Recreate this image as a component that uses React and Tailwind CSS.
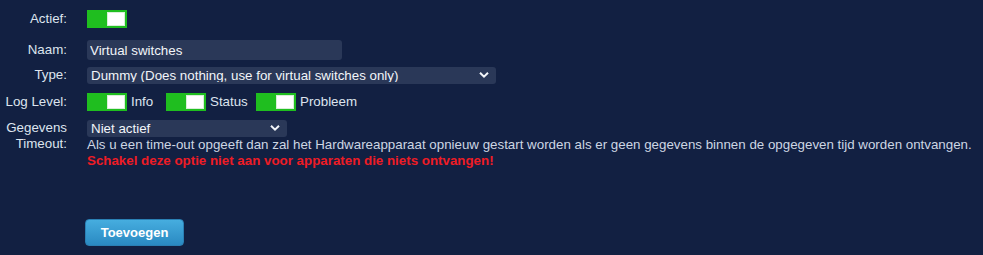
import { useState } from 'react';

const Toggle = ({ on, onClick }) => (
  <button
    type="button"
    onClick={onClick}
    className={`relative h-[18px] w-[40px] shrink-0 ${on ? 'bg-[#1fbe1f]' : 'bg-[#5a6478]'}`}
  >
    <span
      className={`absolute top-[2px] h-[14px] w-[18px] border border-[#d8efd8] bg-white ${on ? 'right-[2px]' : 'left-[2px]'}`}
    />
  </button>
);

const Chevron = () => (
  <svg
    className="pointer-events-none absolute right-[7px] top-1/2 -translate-y-1/2"
    width="10"
    height="7"
    viewBox="0 0 10 7"
    fill="none"
    stroke="#f2f5f9"
    strokeWidth="2"
  >
    <path d="M1 1.2l4 4 4-4" />
  </svg>
);

const Select = ({ value, onChange, options, className }) => (
  <div className={`relative ${className}`}>
    <select
      value={value}
      onChange={(e) => onChange(e.target.value)}
      className="h-full w-full appearance-none rounded-[3px] bg-[#2a3858] pl-[4px] pr-6 text-[13.33px] leading-none text-[#f2f5f9] outline-none"
    >
      {options.map((o) => (
        <option key={o} value={o}>
          {o}
        </option>
      ))}
    </select>
    <Chevron />
  </div>
);

const Label = ({ children, className = '' }) => (
  <div className={`w-[67px] shrink-0 text-right text-[13.33px] leading-[16px] text-[#dde4ee] ${className}`}>
    {children}
  </div>
);

export default function App() {
  const [actief, setActief] = useState(true);
  const [naam, setNaam] = useState('Virtual switches');
  const [type, setType] = useState('Dummy (Does nothing, use for virtual switches only)');
  const [levels, setLevels] = useState({ info: true, status: true, probleem: true });
  const [timeout, setTimeoutValue] = useState('Niet actief');

  const flip = (k) => setLevels((l) => ({ ...l, [k]: !l[k] }));

  return (
    <div className="min-h-[255px] w-full bg-[#122042] font-['Liberation_Sans',Arial,sans-serif] text-[13.33px] text-[#dde4ee]">
      <div className="flex flex-col pt-[10px]">
        <div className="flex h-[18px] items-center gap-5">
          <Label>Actief:</Label>
          <Toggle on={actief} onClick={() => setActief(!actief)} />
        </div>

        <div className="mt-[12px] flex h-[20px] items-center gap-5">
          <Label>Naam:</Label>
          <input
            value={naam}
            onChange={(e) => setNaam(e.target.value)}
            className="h-[20px] w-[255px] rounded-[3px] bg-[#2a3858] px-[3px] text-[13.33px] text-[#f2f5f9] outline-none"
          />
        </div>

        <div className="mt-[6px] flex h-[17px] items-center gap-5">
          <Label>Type:</Label>
          <Select
            value={type}
            onChange={setType}
            className="h-[17px] w-[409px]"
            options={['Dummy (Does nothing, use for virtual switches only)']}
          />
        </div>

        <div className="mt-[10px] flex h-[17px] items-center gap-5">
          <Label>Log Level:</Label>
          <div className="flex items-center">
            <Toggle on={levels.info} onClick={() => flip('info')} />
            <span className="ml-[4px] mr-[13px] w-[22px]">Info</span>
            <Toggle on={levels.status} onClick={() => flip('status')} />
            <span className="ml-[4px] mr-[9px] w-[37px]">Status</span>
            <Toggle on={levels.probleem} onClick={() => flip('probleem')} />
            <span className="ml-[4px]">Probleem</span>
          </div>
        </div>

        <div className="mt-[9px] flex gap-5">
          <Label className="pt-[1px]">
            Gegevens
            <br />
            Timeout:
          </Label>
          <div className="flex flex-col">
            <Select
              value={timeout}
              onChange={setTimeoutValue}
              className="h-[17px] w-[200px]"
              options={['Niet actief', '1 minuut', '5 minuten', '10 minuten', '1 uur']}
            />
            <p className="mt-[1px] leading-[16px] text-[#cdd6e3]">
              Als u een time-out opgeeft dan zal het Hardwareapparaat opnieuw gestart worden als er geen gegevens binnen de opgegeven tijd worden ontvangen.
            </p>
            <p className="font-bold leading-[16px] text-[#ee1c25]">
              Schakel deze optie niet aan voor apparaten die niets ontvangen!
            </p>
          </div>
        </div>

        <div className="mt-[50px] pl-[85px]">
          <button
            type="button"
            className="h-[27px] w-[99px] rounded-[4px] border border-[#2a80b4] bg-gradient-to-b from-[#46addf] to-[#2a8ac2] text-[13px] font-bold text-white"
          >
            Toevoegen
          </button>
        </div>
      </div>
    </div>
  );
}
